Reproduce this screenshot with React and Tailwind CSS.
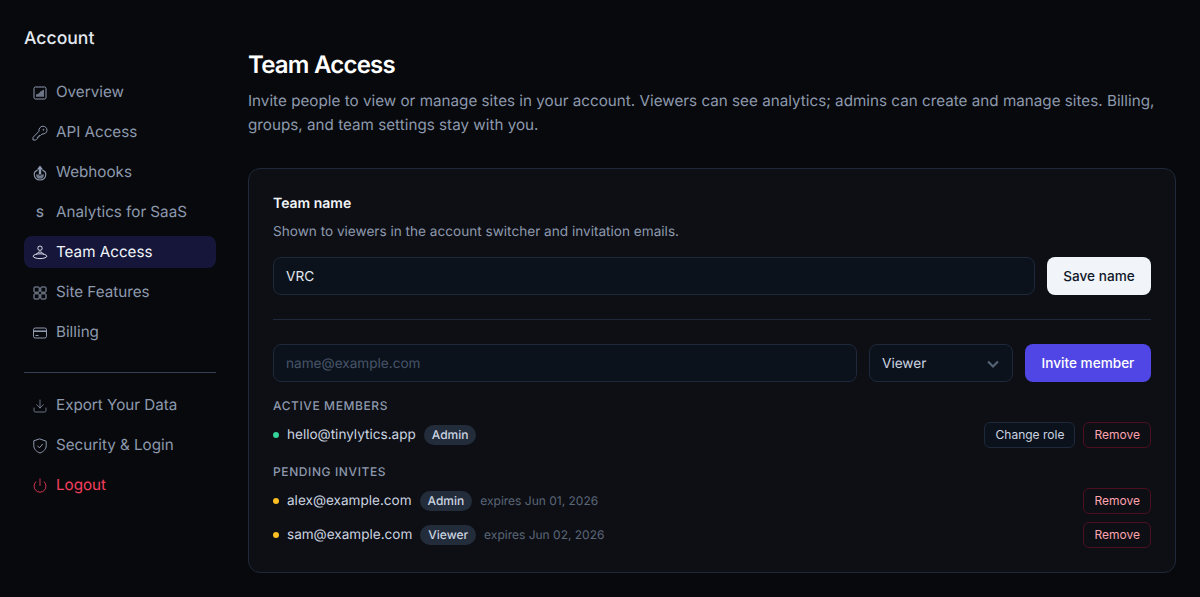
import { Download, Power } from "lucide-react";

const OverviewIcon = () => (
  <svg width="14" height="14" viewBox="0 0 14 14" fill="none">
    <rect x="1" y="1" width="12" height="12" rx="1.5" stroke="currentColor" strokeWidth="1" />
    <path d="M3 10.8V8.5L5.8 7.6L7.4 5.4L11 3.4V10.8Z" fill="currentColor" opacity="0.75" />
  </svg>
);

const KeyIcon = () => (
  <svg width="16" height="16" viewBox="0 0 16 16" fill="none" stroke="currentColor" strokeWidth="1" strokeLinejoin="round">
    <path d="M7 6.2C6.6 3.6 8.4 1.2 11 1.2C13.2 1.2 15 3 15 5.2C15 7.6 12.6 9.4 10 9L8.4 10.6H7V12H5.6V13.4L3.6 15H1V12.4Z" />
    <circle cx="11.4" cy="4.8" r="0.5" />
  </svg>
);

const WebhookIcon = () => (
  <svg width="16" height="16" viewBox="0 0 16 16" fill="none">
    <path d="M5.2 5.4C3.2 6 2.2 7.6 2.2 9.6C2.2 12.8 4.8 15 8 15C11.2 15 13.8 12.8 13.8 9.6C13.8 7.6 12.8 6 10.8 5.4" stroke="currentColor" strokeWidth="1.1" strokeLinecap="round" />
    <path d="M8 0.5L4.8 4.4H6.8V9.6H9.2V4.4H11.2Z" fill="currentColor" />
    <path d="M4 9.6C4 12.4 5.8 13.8 8 13.8C10.2 13.8 12 12.4 12 9.6H9.2V10.4H6.8V9.6Z" fill="currentColor" opacity="0.8" />
  </svg>
);

const TeamIcon = () => (
  <svg width="16" height="16" viewBox="0 0 16 16" fill="none" stroke="currentColor" strokeWidth="0.9">
    <circle cx="8" cy="3.2" r="2.2" />
    <ellipse cx="8" cy="11.2" rx="6.8" ry="2.4" />
    <path d="M4.6 9.4C5 7.9 6.3 7 8 7C9.7 7 11 7.9 11.4 9.4" />
  </svg>
);

const GridIcon = () => (
  <svg width="14" height="14" viewBox="0 0 14 14" fill="none" stroke="currentColor" strokeWidth="1">
    <rect x="1" y="1" width="5.2" height="5.2" rx="0.6" />
    <rect x="7.8" y="1" width="5.2" height="5.2" rx="0.6" />
    <rect x="1" y="7.8" width="5.2" height="5.2" rx="0.6" />
    <rect x="7.8" y="7.8" width="5.2" height="5.2" rx="0.6" />
  </svg>
);

const CardIcon = () => (
  <svg width="16" height="16" viewBox="0 0 16 16" fill="none" stroke="currentColor">
    <rect x="1.5" y="3" width="13" height="10" rx="1.8" strokeWidth="1" />
    <path d="M1.5 6.2H14.5" strokeWidth="1.6" />
    <path d="M3.5 10.5H6.5" strokeWidth="1" />
  </svg>
);

const ShieldIcon = () => (
  <svg width="16" height="16" viewBox="0 0 16 16" fill="none" stroke="currentColor" strokeWidth="1" strokeLinejoin="round" strokeLinecap="round">
    <path d="M8 1L14.2 3.2V7.8C14.2 11.2 11.4 13.8 8 15C4.6 13.8 1.8 11.2 1.8 7.8V3.2Z" />
    <path d="M5.6 8L7.4 9.8L10.6 6.2" />
  </svg>
);

const NavItem = ({ icon, label, active, danger }) => (
  <a
    className={`flex h-8 items-center gap-2 rounded-lg pl-2 pt-[1.2px] text-[15.2px] ${
      active ? "bg-[#15163a] text-[#f1f5f9]" : danger ? "text-[#f43f5e]" : "text-[#8d99ae]"
    }`}
  >
    <span className="flex w-4 justify-center">{icon}</span>
    {label}
  </a>
);

const RoleBadge = ({ children }) => (
  <span className="rounded-full bg-[#232c3b] px-2 py-0.5 text-xs font-medium leading-4 text-[#cbd5e1]">{children}</span>
);

const RemoveButton = () => (
  <button className="h-[26px] rounded-md border border-[#4c0f20] px-[10px] text-xs text-[#fda4af]">Remove</button>
);

const Row = ({ dot, email, role, expires, children }) => (
  <div className="flex h-[26px] items-center justify-between">
    <div className="flex items-center gap-2">
      <span className={`h-1.5 w-1.5 rounded-full ${dot}`} />
      <span className="text-[13.55px] text-[#cbd5e1]">{email}</span>
      <RoleBadge>{role}</RoleBadge>
      {expires && <span className="text-xs text-[#5b6779]">{expires}</span>}
    </div>
    <div className="flex items-center gap-2">{children}</div>
  </div>
);

export default function App() {
  return (
    <div
      className="flex h-[597px] w-[1200px] overflow-hidden bg-[#08090c] text-white antialiased [text-rendering:geometricPrecision]"
      style={{ fontFamily: "Inter, sans-serif" }}
    >
      {/* Sidebar */}
      <aside className="ml-6 w-48 shrink-0 pt-[28px]">
        <h2 className="text-[17.6px] font-medium leading-[22px] text-[#e2e8f0]">Account</h2>
        <nav className="mt-[26px] flex flex-col gap-2">
          <NavItem icon={<OverviewIcon />} label="Overview" />
          <NavItem icon={<KeyIcon />} label="API Access" />
          <NavItem icon={<WebhookIcon />} label="Webhooks" />
          <NavItem icon={<span className="text-xs font-semibold">S</span>} label="Analytics for SaaS" />
          <NavItem icon={<TeamIcon />} label="Team Access" active />
          <NavItem icon={<GridIcon />} label="Site Features" />
          <NavItem icon={<CardIcon />} label="Billing" />
        </nav>
        <div className="mb-4 mt-6 border-t border-[#334155]" />
        <nav className="flex flex-col gap-2">
          <NavItem icon={<Download size={18} strokeWidth={1.1} />} label="Export Your Data" />
          <NavItem icon={<ShieldIcon />} label="Security & Login" />
          <NavItem icon={<Power size={17} strokeWidth={1.25} />} label="Logout" danger />
        </nav>
      </aside>

      {/* Main */}
      <main className="ml-8 w-[928px] pt-[49px]">
        <h1 className="text-2xl font-semibold leading-8 tracking-[-0.0325em] text-white">Team Access</h1>
        <p className="mt-2 text-[15.2px] leading-6 tracking-[0.02px] text-[#8d99ae]">
          Invite people to view or manage sites in your account. Viewers can see analytics; admins can create and manage sites. Billing, groups, and team settings stay with you.
        </p>

        <section className="mt-[31px] h-[405px] rounded-xl border border-[#1e293b] bg-[#0e0f14] px-6 pt-[25px]">
          <h3 className="text-sm font-semibold leading-5 text-[#f1f5f9]">Team name</h3>
          <p className="mt-2 text-[13.6px] leading-5 text-[#8d99ae]">Shown to viewers in the account switcher and invitation emails.</p>
          <div className="mt-[15px] flex gap-3">
            <div className="flex h-[38px] flex-1 items-center rounded-lg border border-[#1e293b] bg-[#0c121c] px-3 pt-0.5 text-[13.6px] text-[#e2e8f0]">VRC</div>
            <button className="h-[38px] w-[104px] rounded-lg bg-[#f1f5f9] text-[13.6px] font-medium text-[#0f172a]">Save name</button>
          </div>
          <div className="mt-6 border-t border-[#1e293b]" />
          <div className="mt-6 flex gap-3">
            <div className="flex h-[38px] flex-1 items-center rounded-lg border border-[#1e293b] bg-[#0c121c] px-3 pt-0.5 text-[13.6px] text-[#475569]">name@example.com</div>
            <div className="flex h-[38px] w-36 items-center justify-between rounded-lg border border-[#1e293b] bg-[#0c121c] pl-3 pr-[13px] pt-0.5 text-[13.6px] text-[#cbd5e1]">
              Viewer
              <svg width="12" height="12" viewBox="0 0 12 12" fill="none">
                <path d="M1 3.5L6 8.5L11 3.5" stroke="#556175" strokeWidth="2.2" />
              </svg>
            </div>
            <button className="h-[38px] w-[126px] rounded-lg bg-[#4f46e5] text-[13.6px] font-medium text-white">Invite member</button>
          </div>

          <h4 className="mt-[16px] text-xs font-medium leading-4 tracking-[0.05em] text-[#8d99ae]">ACTIVE MEMBERS</h4>
          <div className="mt-2">
            <Row dot="bg-[#34d399]" email="hello@tinylytics.app" role="Admin">
              <button className="h-[26px] w-[91px] rounded-md border border-[#1e293b] bg-[#0c121c] text-xs text-[#cbd5e1]">Change role</button>
              <RemoveButton />
            </Row>
          </div>
          <h4 className="mt-[16px] text-xs font-medium leading-4 tracking-[0.05em] text-[#8d99ae]">PENDING INVITES</h4>
          <div className="mt-2 flex flex-col gap-2">
            <Row dot="bg-[#fbbf24]" email="alex@example.com" role="Admin" expires="expires Jun 01, 2026">
              <RemoveButton />
            </Row>
            <Row dot="bg-[#fbbf24]" email="sam@example.com" role="Viewer" expires="expires Jun 02, 2026">
              <RemoveButton />
            </Row>
          </div>
        </section>
      </main>
    </div>
  );
}
